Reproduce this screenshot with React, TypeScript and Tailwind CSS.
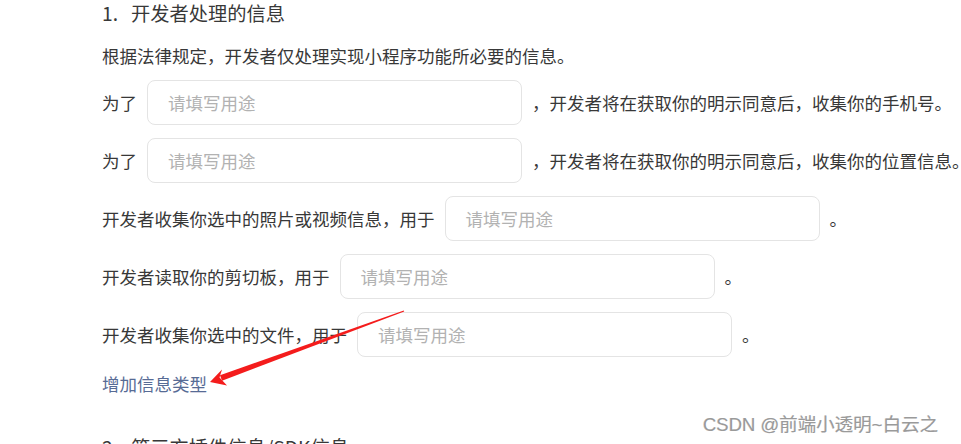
import React from "react";

const font = { fontFamily: '"Noto Sans CJK SC", "Noto Sans", sans-serif' };

function Field() {
  return (
    <div className="h-[45px] w-[375px] shrink-0 rounded-[8px] border border-[#e4e4e4] bg-white px-5 flex items-center text-[17.5px] text-[#b2b2b2] leading-[26px]">
      请填写用途
    </div>
  );
}

function Row({ before, after }: { before: string; after: string }) {
  return (
    <div className="mt-[13px] flex items-center whitespace-nowrap text-[17.5px] leading-[26px] text-[#383838]">
      <span>{before}</span>
      <div className="mx-[10px]">
        <Field />
      </div>
      <span>{after}</span>
    </div>
  );
}

export default function App() {
  return (
    <div className="relative h-[444px] w-[961px] overflow-hidden bg-white" style={font}>
      <div className="pl-[102px]">
        <div className="h-[26px] leading-[26px] text-[19.25px] text-[#383838] whitespace-nowrap">
          <span className="inline-block w-[29px]">1.</span>开发者处理的信息
        </div>
        <div className="mt-[17px] text-[17.5px] leading-[26px] text-[#383838] whitespace-nowrap">
          根据法律规定，开发者仅处理实现小程序功能所必要的信息。
        </div>
        <div className="mt-[11px] flex items-center whitespace-nowrap text-[17.5px] leading-[26px] text-[#383838]">
          <span>为了</span>
          <div className="mx-[10px]">
            <Field />
          </div>
          <span>，开发者将在获取你的明示同意后，收集你的手机号。</span>
        </div>
        <Row before="为了" after="，开发者将在获取你的明示同意后，收集你的位置信息。" />
        <Row before="开发者收集你选中的照片或视频信息，用于" after="。" />
        <Row before="开发者读取你的剪切板，用于" after="。" />
        <Row before="开发者收集你选中的文件，用于" after="。" />
        <div className="mt-[14px] text-[17.5px] leading-[26px] text-[#576b95] whitespace-nowrap">增加信息类型</div>
        <div className="mt-[37px] h-[26px] leading-[26px] text-[19.25px] text-[#383838] whitespace-nowrap">
          <span className="inline-block w-[29px]">2.</span>第三方插件信息/SDK信息
        </div>
      </div>

      <svg className="absolute left-0 top-0 pointer-events-none" width="961" height="444" viewBox="0 0 961 444">
        <polygon points="404.2,311.6 403.8,310.4 220.0,375.3 222.0,380.7" fill="#f41c1c" />
        <polygon points="210,382 222,369.5 219.5,377.5 227,385.5" fill="#f41c1c" />
      </svg>

      <div
        className="absolute left-[703px] top-[412px] text-[18.5px] leading-[26px] text-[#9a9a9a] whitespace-nowrap"
        style={{
          fontFamily: '"Liberation Sans", "Noto Sans CJK SC", sans-serif',
          textShadow: "1px 1px 0 #ffffff, -0.5px -0.5px 0 #d0d0d0",
        }}
      >
        CSDN @前端小透明~白云之
      </div>
    </div>
  );
}
